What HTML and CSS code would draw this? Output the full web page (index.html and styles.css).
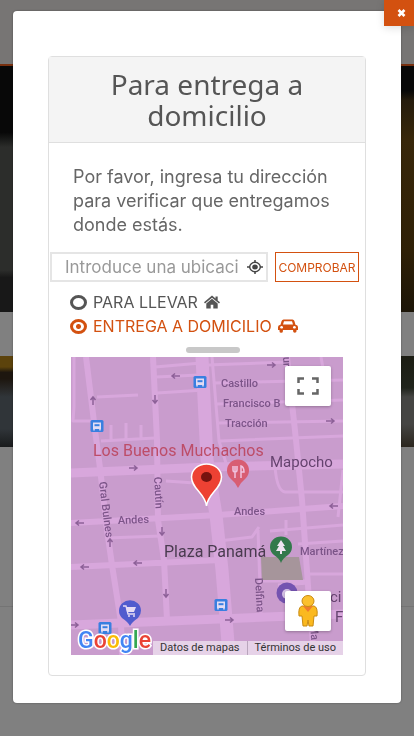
FILE: index.html
```html
<!DOCTYPE html>
<html lang="es">
<head>
<meta charset="utf-8">
<meta name="viewport" content="width=device-width, initial-scale=1">
<title>Para entrega a domicilio</title>
<link rel="stylesheet" href="styles.css">
</head>
<body>
<div class="backdrop" aria-hidden="true">
  <div class="backdrop-top"></div>
  <div class="backdrop-hero"></div>
  <div class="backdrop-gap"></div>
  <div class="backdrop-photo"></div>
  <div class="backdrop-panel"></div>
  <div class="backdrop-foot"></div>
</div>
<button class="close" type="button" aria-label="Cerrar">
  <svg width="9" height="8" viewBox="0 0 9 8"><path d="M1.5 1L7.5 7M7.5 1L1.5 7" stroke="#fff" stroke-width="2.6"/></svg>
</button>
<main class="dialog">
  <section class="card">
    <header class="card-header"><h1>Para entrega a domicilio</h1></header>
    <p class="intro">Por favor, ingresa tu dirección para verificar que entregamos donde estás.</p>
    <form class="search">
      <div class="field">
        <input type="text" placeholder="Introduce una ubicación" aria-label="Introduce una ubicación">
        <button class="locate" type="button" aria-label="Usar mi ubicación">
          <svg width="16" height="14" viewBox="0 0 16 14" fill="none" stroke="#444"><ellipse cx="8" cy="7" rx="5.3" ry="4.7" stroke-width="1.4"/><ellipse cx="8" cy="7" rx="2.8" ry="2.5" fill="#444" stroke="none"/><path d="M8 0v3M8 11v3M0 7h3M13 7h3" stroke-width="1.5"/></svg>
        </button>
      </div>
      <button class="check" type="button">COMPROBAR</button>
    </form>
    <div class="options">
      <label class="option"><input type="radio" name="modo"><span>PARA LLEVAR</span>
        <svg width="16" height="14" viewBox="0 0 16 14" fill="currentColor"><path d="M8 .5L0 7.300l1 1.200L8 2.700l7 5.800 1-1.200-2.300-1.900V1.500h-2.200v2z"/><path d="M8 3.700L2.300 8.400V13.500h4.400V9.800h2.600v3.700h4.400V8.400z"/></svg>
      </label>
      <label class="option"><input type="radio" name="modo" checked><span>ENTREGA A DOMICILIO</span>
        <svg width="20" height="14" viewBox="0 0 20 14"><path fill="currentColor" fill-rule="evenodd" d="M5.600.5h8.800q1.500 0 2 1.500l1.100 3.700Q20 6 20 8v3h-1.500v1.200a1.700 1.500 0 0 1-3.400 0V11H4.900v1.200a1.700 1.500 0 0 1-3.400 0V11H0V8q0-2 2.500-2.300L3.600 2q.5-1.500 2-1.500zM6 2.300L5 5.600h10l-1-3.300zM3.600 7a1.500 1.300 0 1 0 .01 0zm12.800 0a1.500 1.300 0 1 0 .01 0z"/></svg>
      </label>
    </div>
    <div class="handle"></div>
    <div class="map">
      <svg class="map-canvas" viewBox="71 357 272 298" preserveAspectRatio="xMidYMid slice" role="img" aria-label="Mapa">
        <defs>
          <g id="arrow"><path d="M-4 0H4M1 -2.500L4 0L1 2.500" fill="none" stroke="#8d6198" stroke-width="1.500"/></g>
          <g id="bus"><rect x="-6.500" y="-6" width="13" height="12" rx="1.500" fill="#397fe0"/><path d="M-4 -3.500h8v6.500h-8z" fill="#e3dcf4"/><path d="M-2.500 -1.800h5v2h-5z" fill="#397fe0"/><path d="M-3 3v1.500M3 3v1.500" stroke="#e3dcf4" stroke-width="1.500"/></g>
        </defs>
        <path fill="#c99ccd" d="M71 357h272v298H71z"/>
        <g class="roads">
          <g stroke-width="3">
            <path d="M97 397L138 395M74 357v50L73 421H91M101 441L155 438M111 441V425M126 439V423M141 439V425M155 367L201 363M156 377L199 375M157 393L204 390M106 538L161 536M209 484L166 481M206 365L289 362M214 383L343 380M217 404L343 400M219 423L343 421M220 441L343 436M212 357L219 441L226 463M321 357L326 385M275 467Q277 491 285 492H343M343 470L338 517M219 541L252 537L259 527M270 531L343 525M258 530L261 616M286 520V535M310 574H343M263 581H308M298 544L343 541M278 585L310 583"/>
          </g>
          <g stroke-width="6">
            <path d="M86 357L95 430L100 468L107 530L112 565L121 622L122 655M153 357L157 440L158 520L164 560L167 620M287 357L296 440L302 500L309 600L314 655M71 523L218 515L343 506M71 567L220 560"/>
          </g>
          <g stroke-width="9"><path d="M71 473L210 467L343 464M71 625L343 614"/></g>
          <path stroke-width="13" d="M202 357L207 460L216 515L222 570L229 655"/>
        </g>
        <path fill="#a6959b" d="M261 557h38l4 23h-41z"/>
        <use href="#arrow" transform="translate(93 401) rotate(-90)"/><use href="#arrow" transform="translate(155 399) rotate(90)"/>
        <use href="#arrow" transform="translate(176 376) rotate(180)"/><use href="#arrow" transform="translate(133 468)"/>
        <use href="#arrow" transform="translate(271 365)"/><use href="#arrow" transform="translate(330 421)"/>
        <use href="#arrow" transform="translate(80 523) rotate(180)"/><use href="#arrow" transform="translate(334 506) rotate(180)"/>
        <use href="#arrow" transform="translate(110 543) rotate(-90)"/><use href="#arrow" transform="translate(162 531) rotate(90)"/>
        <use href="#arrow" transform="translate(85 567) rotate(180)"/><use href="#arrow" transform="translate(138 563) rotate(180)"/>
        <use href="#arrow" transform="translate(166 593) rotate(90)"/><use href="#arrow" transform="translate(74 625)"/><use href="#arrow" transform="translate(229 620)"/>
        <use href="#bus" x="200" y="382"/><use href="#bus" x="97" y="426"/><use href="#bus" x="221" y="605"/><use href="#bus" x="105" y="628"/>
        <g class="street">
          <text x="221" y="387">Castillo</text><text x="223" y="407">Francisco B</text><text x="225" y="427">Tracción</text>
          <text x="118" y="524" transform="rotate(-2 118 524)">Andes</text><text x="234" y="515">Andes</text><text x="300" y="555">Martínez</text>
          <text transform="translate(99 482) rotate(83)">Gral Bulnes</text><text transform="translate(154 477) rotate(87)">Cautín</text>
          <text transform="translate(255 578) rotate(87)">Delfina</text><text transform="translate(283 357) rotate(87)">ur</text><text transform="translate(310 625) rotate(85)">Ma</text>
        </g>
        <text class="place" x="270" y="467">Mapocho</text>
        <text class="park" x="164" y="557">Plaza Panamá</text>
        <text class="food" x="93" y="456">Los Buenos Muchachos</text>
        <text class="place" x="330" y="602">ci</text><text class="place" x="335" y="622">F</text>
        <path fill="#d85d72" d="M238 488Q235 482 230 478A11 11 0 1 1 246 478Q241 482 238 488z"/>
        <path d="M233 466v4q0 2 2 2t2-2v-4M235 466v12M241 478v-12q3 1 3 6h-3" fill="none" stroke="#f0c2df" stroke-width="1.500"/>
        <path fill="#32794b" d="M281 563Q279 558 274 555A11 10.500 0 1 1 288 555Q283 558 281 563z"/>
        <path fill="#eee5f1" d="M281 540l4 6h-2l3 5h-4v3h-2v-3h-4l3-5h-2z"/>
        <circle cx="287" cy="593" r="10.500" fill="#7453b0"/><circle cx="287" cy="594" r="5" fill="#d5c1e6"/>
        <path fill="#515cce" d="M130 626Q128 622 122 618A11 10.500 0 1 1 138 618Q132 622 130 626z"/>
        <path d="M123 606h3l2 8h7" fill="none" stroke="#e6dcf4" stroke-width="1.300"/><path fill="#e6dcf4" d="M126 607h10l-2 5h-7z"/><circle cx="129" cy="616" r="1" fill="#e6dcf4"/><circle cx="134" cy="616" r="1" fill="#e6dcf4"/>
        <path fill="#ed4133" stroke="#fff" stroke-width="1.500" d="M206.500 506C205 493 191.500 489 191.500 477A15 13 0 0 1 221.500 477C221.500 489 208 493 206.500 506z"/>
        <ellipse cx="206.500" cy="477" rx="5.500" ry="5" fill="#76130f"/>
        <text class="google" x="78" y="648"><tspan fill="#4285f4">G</tspan><tspan fill="#ea4335">o</tspan><tspan fill="#fbbc05">o</tspan><tspan fill="#4285f4">g</tspan><tspan fill="#34a853">l</tspan><tspan fill="#ea4335">e</tspan></text>
      </svg>
      <button class="map-button full" type="button" aria-label="Pantalla completa">
        <svg width="22" height="18" viewBox="0 0 22 18" fill="none" stroke="#666" stroke-width="2.500"><path d="M1.500 6V1.500H7M15 1.500h5.500V6M1.500 12v4.500H7M15 16.500h5.500V12"/></svg>
      </button>
      <button class="map-button person" type="button" aria-label="Street View">
        <svg width="22" height="32" viewBox="0 0 22 32"><path d="M5 11Q1 12 2 21h3l1 10h4l1-6 1 6h4l1-10h3q1-9-3-10z" fill="#fbb91f" stroke="#c98b13"/><path d="M6 11h10l-5 6z" fill="#ef7b2c"/><ellipse cx="11" cy="6" rx="6" ry="5.500" fill="#fbc02d" stroke="#c98b13"/></svg>
      </button>
      <div class="credits"><a href="#">Datos de mapas</a><a href="#">Términos de uso</a></div>
    </div>
  </section>
</main>
</body>
</html>
```
FILE: styles.css
```css
* { box-sizing: border-box; }
body {
  margin: 0;
  min-height: 100vh;
  padding: 11px 13px 33px;
  background: #808080;
  color: #555;
  font-family: Inter, sans-serif;
}
button { padding: 0; border: 0; font: inherit; cursor: pointer; }
svg { display: block; }

.backdrop {
  position: fixed;
  inset: 0;
  z-index: -1;
  display: grid;
  grid-template-rows: 66px 246px 44px 91px 160px 1fr;
}
.backdrop-top { background: #777574; border-bottom: 2px solid #78300f; }
.backdrop-hero {
  background:
    linear-gradient(#080808 0 10%, transparent 14%) right / 50% 100% no-repeat,
    linear-gradient(#15130f, #38270a 30%, #2f2006 75%, #1c1508) right / 50% 100% no-repeat,
    linear-gradient(#080808 0 27%, #2c2d2b 33% 83%, #181818 86%) left / 50% 100% no-repeat;
}
.backdrop-photo {
  background:
    linear-gradient(#1c1d13, #20241c 35%, #454543 45% 75%, #2b261e) right / 50% 100% no-repeat,
    linear-gradient(#5c430c 0 12%, #1d160f 18% 25%, #303539 45% 80%, #191b1c) left / 50% 100% no-repeat;
}
.backdrop-panel { border-bottom: 1px solid #747474; }

.close {
  position: fixed;
  top: 0;
  right: 0;
  z-index: 2;
  display: grid;
  place-items: center;
  width: 30px;
  height: 26px;
  padding-left: 5px;
  background: #d35110;
  box-shadow: 0 2px 8px #0002;
}

.dialog {
  padding: 45px 35px 27px;
  border-radius: 4px;
  background: #fff;
  box-shadow: 0 0 2px #0006;
}
.card {
  padding-bottom: 20px;
  border: 1px solid #dfdfdf;
  border-radius: 4px;
}
.card-header {
  padding: 12px 40px 11px;
  border-bottom: 1px solid #dfdfdf;
  background: #f4f4f4;
  text-align: center;
}
h1 {
  margin: 0;
  font: 400 28px/31px "Noto Sans", sans-serif;
}
.intro {
  margin: 22px 20px 15px 24px;
  color: #666;
  font-size: 18px;
  line-height: 24px;
}
.search { display: flex; gap: 7px; margin: 0 6px 0 1px; }
.field {
  display: flex;
  flex: 1;
  min-width: 0;
  height: 30px;
  border: 2px solid #e5e5e5;
}
.field input {
  flex: 1;
  min-width: 0;
  padding: 0;
  margin-left: 13px;
  border: 0;
  outline: 0;
  background: none;
  font: 17px Inter, sans-serif;
}
.field input::placeholder { color: #999; }
.locate {
  display: grid;
  place-items: center;
  width: 28px;
  padding-left: 6px;
  background: none;
}
.check {
  width: 84px;
  border: 1px solid #d35110;
  background: #fff;
  color: #d35110;
  font-size: 12px;
}
.options { margin: 8px 21px 0; }
.option {
  display: flex;
  align-items: center;
  gap: 6px;
  line-height: 24px;
  font-size: 16px;
  white-space: nowrap;
}
.option input {
  appearance: none;
  width: 17px;
  height: 15px;
  margin: 0;
  border: 3px solid #555;
  border-radius: 50%;
}
.option:has(:checked) { color: #d35110; }
.option input:checked {
  border-color: #d35110;
  background: radial-gradient(circle, #d35110 0 2px, #fff 3px);
}
.handle {
  width: 54px;
  height: 6px;
  margin: 8px 125px 4px auto;
  border-radius: 3px;
  background: #c8c8c8;
}
.map {
  position: relative;
  margin: 0 22px;
  overflow: hidden;
}
.map-canvas { width: 100%; height: auto; }
.options + .handle { margin-top: 9px; }
.roads { fill: none; stroke: #d8a7dc; stroke-linejoin: round; }
.map text { font-family: Roboto, sans-serif; }
.street { fill: #7b5488; font-size: 11px; font-weight: 500; }
.place { fill: #65436f; font-size: 15px; }
.park { fill: #4a3b50; font-size: 16px; }
.food { fill: #bd4d68; font-size: 16px; }
.map .google {
  font-family: Roboto, sans-serif;
  font-size: 23px;
  font-weight: 500;
  stroke: #fff;
  stroke-width: 3px;
  paint-order: stroke;
}
.map-button {
  position: absolute;
  right: 12px;
  display: grid;
  place-items: center;
  width: 46px;
  height: 40px;
  border-radius: 2px;
  background: #fff;
  box-shadow: 0 1px 3px #0004;
}
.full { top: 9px; }
.person { bottom: 24px; }
.credits {
  position: absolute;
  right: 0;
  bottom: 0;
  display: flex;
  background: #e6d2e8;
  font: 11px/14px Roboto, sans-serif;
}
.credits a { padding: 0 7px; color: #333; text-decoration: none; }
.credits a + a { border-left: 1px solid #b9a5bc; }
```
